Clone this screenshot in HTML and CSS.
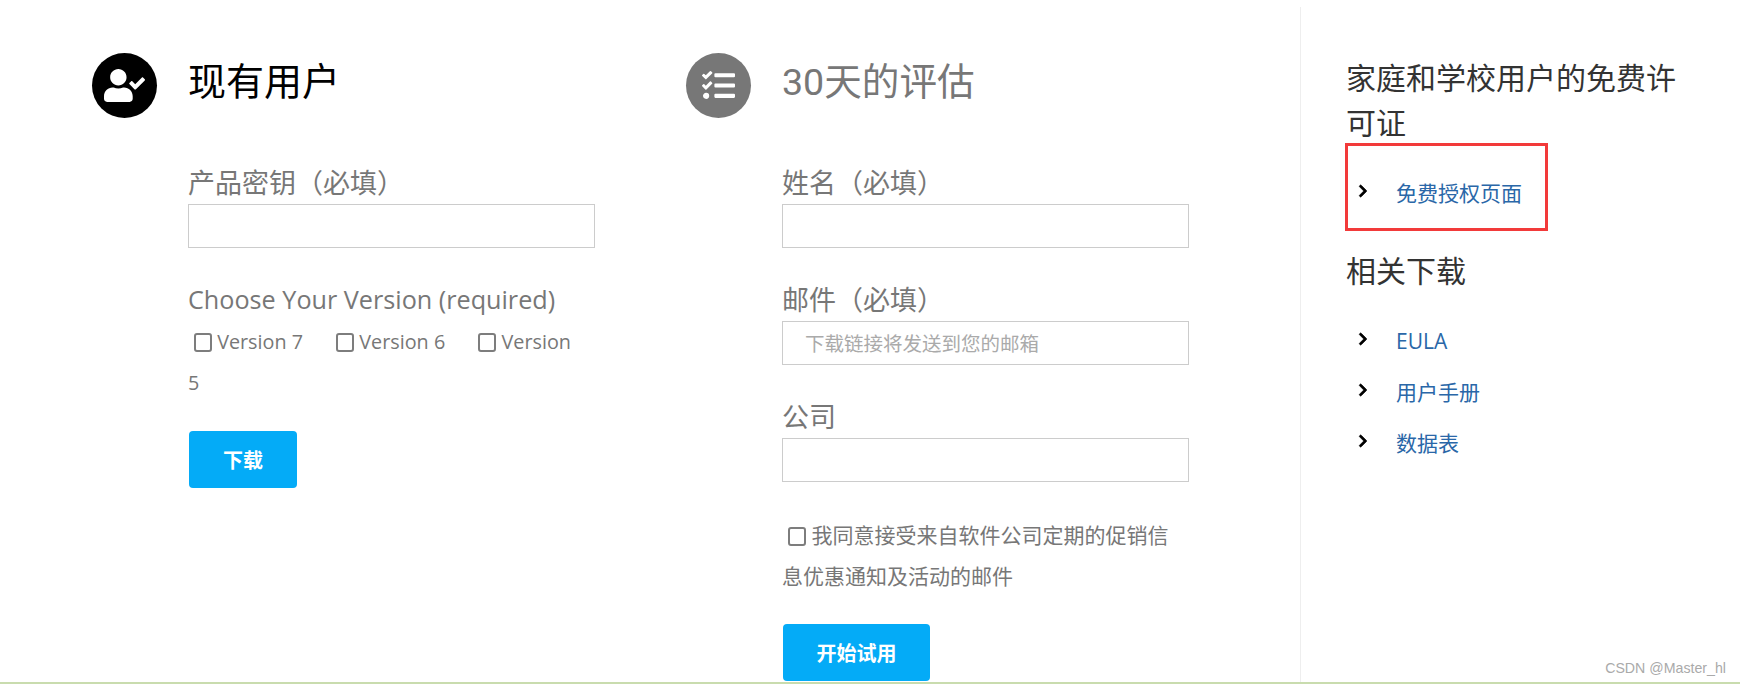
FILE: index.html
```html
<!DOCTYPE html>
<html lang="zh-CN">
<head>
  <meta charset="UTF-8" />
  <meta name="viewport" content="width=device-width, initial-scale=1.0"/>
  <title>下载</title>
  <link rel="stylesheet" href="styles.css">
</head>
<body>

  <div class="page">
    <!-- Existing users -->
    <section class="column">
      <div class="column-head">
        <div class="round-icon round-black">
          <svg class="icon-user" viewBox="0 0 640 512"><path fill="#fff" d="M224 256c70.7 0 128-57.3 128-128S294.7 0 224 0 96 57.3 96 128s57.3 128 128 128zm89.6 32h-16.7c-22.2 10.2-46.9 16-72.9 16s-50.6-5.8-72.9-16h-16.7C60.2 288 0 348.2 0 422.4V464c0 26.5 21.5 48 48 48h352c26.5 0 48-21.5 48-48v-41.6c0-74.2-60.2-134.4-134.4-134.4zm323-128.4l-27.8-28.1c-4.6-4.7-12.1-4.7-16.8-.1l-104.8 104-45.5-45.8c-4.6-4.7-12.1-4.7-16.8-.1l-28.1 27.9c-4.7 4.6-4.7 12.1-.1 16.8l81.7 82.3c4.6 4.7 12.1 4.7 16.8.1l141.3-140.2c4.6-4.7 4.7-12.2.1-16.8z"/></svg>
        </div>
        <h1 class="title-black">现有用户</h1>
      </div>
      <form class="form">
        <label class="field">
          <span class="field-label">产品密钥（必填）</span>
          <input type="text" />
        </label>
        <div class="field-label choose-label">Choose Your Version (required)</div>
        <p class="checks versions">
          <input type="checkbox" /> Version 7
          <input type="checkbox" /> Version 6
          <input type="checkbox" /> Version <span>5</span>
        </p>
        <button type="button" class="btn btn-small">下载</button>
      </form>
    </section>

    <!-- 30 day trial -->
    <section class="column column-wide">
      <div class="column-head">
        <div class="round-icon round-grey">
          <svg class="icon-tasks" viewBox="0 0 512 512"><path fill="#fff" d="M139.61 35.5a12 12 0 0 0-17 0L58.93 98.81l-22.7-22.12a12 12 0 0 0-17 0L3.53 92.41a12 12 0 0 0 0 17l47.59 47.4a12.78 12.78 0 0 0 17.61 0l15.59-15.62L156.52 69a12.09 12.09 0 0 0 .09-17zm0 159.19a12 12 0 0 0-17 0l-63.68 63.72-22.7-22.1a12 12 0 0 0-17 0L3.53 252a12 12 0 0 0 0 17L51 316.5a12.77 12.77 0 0 0 17.6 0l15.7-15.69 72.2-72.22a12 12 0 0 0 .09-16.9zM64 368c-26.49 0-48.59 21.5-48.59 48S37.53 464 64 464a48 48 0 0 0 0-96zm432 16H208a16 16 0 0 0-16 16v32a16 16 0 0 0 16 16h288a16 16 0 0 0 16-16v-32a16 16 0 0 0-16-16zm0-320H208a16 16 0 0 0-16 16v32a16 16 0 0 0 16 16h288a16 16 0 0 0 16-16V80a16 16 0 0 0-16-16zm0 160H208a16 16 0 0 0-16 16v32a16 16 0 0 0 16 16h288a16 16 0 0 0 16-16v-32a16 16 0 0 0-16-16z"/></svg>
        </div>
        <h1 class="title-grey">30天的评估</h1>
      </div>
      <form class="form">
        <label class="field">
          <span class="field-label">姓名（必填）</span>
          <input type="text" />
        </label>
        <label class="field">
          <span class="field-label">邮件（必填）</span>
          <input type="text" placeholder="下载链接将发送到您的邮箱" />
        </label>
        <label class="field">
          <span class="field-label">公司</span>
          <input type="text" />
        </label>
        <p class="checks agree">
          <input type="checkbox" /> 我同意接受来自软件公司定期的促销信息优惠通知及活动的邮件
        </p>
        <button type="button" class="btn btn-large">开始试用</button>
      </form>
    </section>

    <!-- Sidebar -->
    <aside class="sidebar">
      <h3 class="side-title first-title">家庭和学校用户的免费许可证</h3>
      <div class="red-box">
        <ul class="side-list">
          <li>
            <svg class="chevron" viewBox="0 0 320 512"><path d="M285.476 272.971L91.132 467.314c-9.373 9.373-24.569 9.373-33.941 0l-22.667-22.667c-9.357-9.357-9.375-24.522-.04-33.901L188.505 256 34.484 101.255c-9.335-9.379-9.317-24.544.04-33.901l22.667-22.667c9.373-9.373 24.569-9.373 33.941 0L285.475 239.03c9.373 9.372 9.373 24.568.001 33.941z"/></svg>
            <a href="#">免费授权页面</a>
          </li>
        </ul>
      </div>
      <h3 class="side-title">相关下载</h3>
      <ul class="side-list downloads">
        <li>
          <svg class="chevron" viewBox="0 0 320 512"><path d="M285.476 272.971L91.132 467.314c-9.373 9.373-24.569 9.373-33.941 0l-22.667-22.667c-9.357-9.357-9.375-24.522-.04-33.901L188.505 256 34.484 101.255c-9.335-9.379-9.317-24.544.04-33.901l22.667-22.667c9.373-9.373 24.569-9.373 33.941 0L285.475 239.03c9.373 9.372 9.373 24.568.001 33.941z"/></svg>
          <a href="#">EULA</a>
        </li>
        <li>
          <svg class="chevron" viewBox="0 0 320 512"><path d="M285.476 272.971L91.132 467.314c-9.373 9.373-24.569 9.373-33.941 0l-22.667-22.667c-9.357-9.357-9.375-24.522-.04-33.901L188.505 256 34.484 101.255c-9.335-9.379-9.317-24.544.04-33.901l22.667-22.667c9.373-9.373 24.569-9.373 33.941 0L285.475 239.03c9.373 9.372 9.373 24.568.001 33.941z"/></svg>
          <a href="#">用户手册</a>
        </li>
        <li>
          <svg class="chevron" viewBox="0 0 320 512"><path d="M285.476 272.971L91.132 467.314c-9.373 9.373-24.569 9.373-33.941 0l-22.667-22.667c-9.357-9.357-9.375-24.522-.04-33.901L188.505 256 34.484 101.255c-9.335-9.379-9.317-24.544.04-33.901l22.667-22.667c9.373-9.373 24.569-9.373 33.941 0L285.475 239.03c9.373 9.372 9.373 24.568.001 33.941z"/></svg>
          <a href="#">数据表</a>
        </li>
      </ul>
    </aside>
  </div>

  <div class="bottom-line"></div>
  <div class="watermark">CSDN @Master_hl</div>

</body>
</html>
```

FILE: styles.css
```css
* {
  box-sizing: border-box;
}

html, body {
  height: 100%;
}

body {
  margin: 0;
  background: #fff;
  font-family: "Open Sans", "Noto Sans CJK SC", sans-serif;
  color: #777;
  overflow: hidden;
  position: relative;
}

.page {
  display: flex;
  height: 682px;
  padding-left: 92px;
}

.bottom-line {
  height: 2px;
  background: #c9dcae;
}

/* Columns */
.column {
  width: 594px;
  padding-top: 53px;
}

.column-wide {
  width: 614px;
}

.column-head {
  display: flex;
  gap: 31px;
  height: 65px;
}

.column-head h1 {
  margin: 0;
  font-size: 38px;
  font-weight: 400;
}

.title-black {
  color: #000;
  line-height: 54px;
}

.column-head .title-grey {
  color: #777;
  font-family: Roboto, "Noto Sans CJK SC", sans-serif;
  font-size: 37.6px;
  line-height: 58px;
}

.round-icon {
  width: 65px;
  height: 65px;
  border-radius: 50%;
  display: flex;
  align-items: center;
  justify-content: center;
  flex-shrink: 0;
}

.round-black {
  background: #000;
}

.round-grey {
  background: #777;
}

.icon-user {
  width: 41px;
  height: 33px;
}

.icon-tasks {
  width: 33px;
  height: 33px;
}

/* Forms */
.form {
  margin: 46px 0 0 96px;
  width: 407px;
}

.field {
  display: block;
  margin-bottom: 33px;
}

.field-label {
  display: block;
  height: 40px;
  font-size: 27px;
  line-height: 38px;
}

.choose-label {
  font-size: 25.2px;
  line-height: 36px;
}

.field input {
  display: block;
  width: 100%;
  height: 44px;
  padding: 0 22px;
  border: 1px solid #ccc;
  font-family: inherit;
  font-size: 19.5px;
  color: #555;
}

.field input::placeholder {
  color: #aaa;
}

.checks {
  margin: 0;
  font-size: 19.8px;
  line-height: 41px;
}

.checks input {
  appearance: none;
  width: 18px;
  height: 19px;
  margin: 0 0 0 6px;
  border: 2px solid #7d7d7d;
  border-radius: 3px;
  vertical-align: -3px;
}

.checks input + input {
  margin-left: 28px;
}

.versions {
  width: 395px;
}

.agree {
  margin-top: 32px;
  font-size: 21px;
}

.btn {
  display: block;
  height: 57px;
  border: none;
  border-radius: 4px;
  background: #04abf7;
  color: #fff;
  font-family: inherit;
  font-size: 20px;
  font-weight: 700;
}

.btn-small {
  width: 108px;
  margin: 28px 0 0 1px;
}

.btn-large {
  width: 147px;
  margin: 27px 0 0 1px;
}

/* Sidebar */
.sidebar {
  margin-top: 7px;
  padding: 48px 0 0 45px;
  width: 262px;
  height: 675px;
  border-left: 1px solid #eee;
}

.side-title {
  margin: 0;
  font-size: 30px;
  font-weight: 400;
  line-height: 45px;
  color: #333;
}

.first-title {
  margin-bottom: -2px;
  width: 340px;
}

.red-box {
  width: 203px;
  height: 88px;
  margin: 0 0 17px -1px;
  padding-top: 21px;
  border: 3px solid #f23a3a;
}

.side-list {
  margin: 0;
  padding: 0 0 0 10px;
  list-style: none;
}

.downloads {
  margin-top: 22px;
  padding-left: 12px;
}

.side-list li {
  display: flex;
  align-items: center;
  height: 51px;
}

.side-list a {
  font-size: 21px;
  line-height: 30px;
  color: #2a67a8;
  text-decoration: none;
}

.chevron {
  width: 10px;
  height: 14px;
  margin: 0 28px 3px 0;
  flex-shrink: 0;
  stroke: #000;
  stroke-width: 28px;
}

.watermark {
  position: absolute;
  right: 14px;
  bottom: 8px;
  font-family: "Liberation Sans", sans-serif;
  font-size: 14.2px;
  color: #aaa;
}
```
